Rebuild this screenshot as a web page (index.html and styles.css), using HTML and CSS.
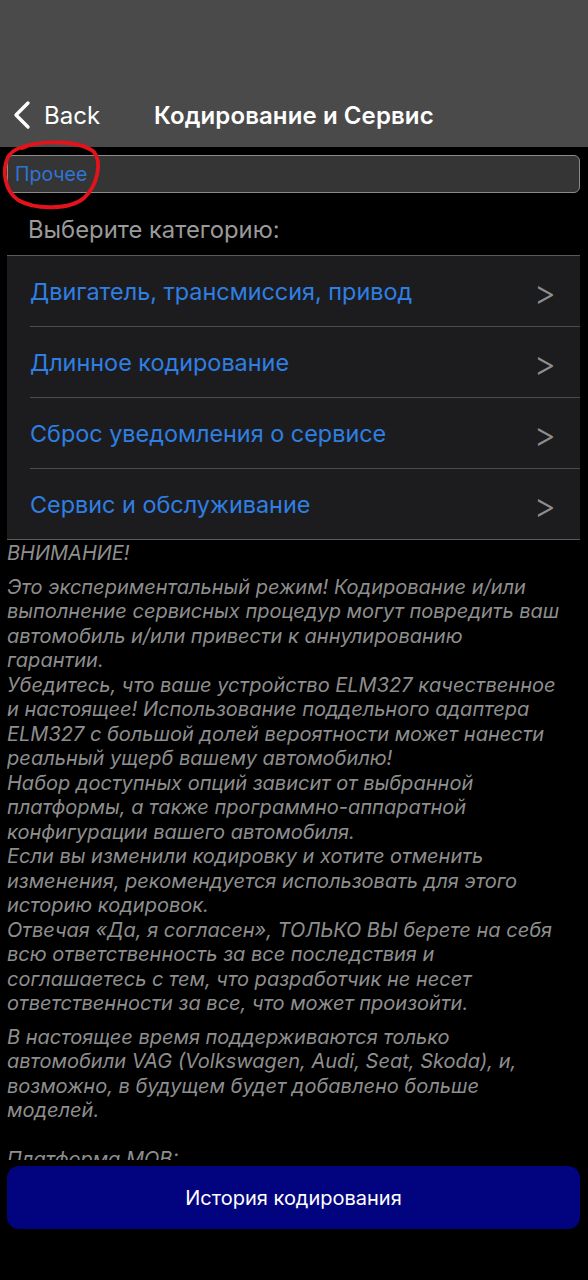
FILE: index.html
```html
<!DOCTYPE html>
<html lang="ru">
<head>
    <meta charset="UTF-8">
    <title>Кодирование и Сервис</title>
    <link rel="stylesheet" href="styles.css">
</head>
<body>
<div class="screen">
    <div class="navbar">
        <div class="back">
            <svg class="chevron" width="20" height="30" viewBox="0 0 20 30">
                <path d="M16 3 L4 15 L16 27" fill="none" stroke="#fff" stroke-width="3.4" stroke-linecap="round" stroke-linejoin="round"/>
            </svg>
            <span>Back</span>
        </div>
        <div class="title">Кодирование и Сервис</div>
    </div>

    <div class="content">
        <div class="platform">Прочее</div>

        <div class="caption">Выберите категорию:</div>

        <ul class="menu">
            <li><span>Двигатель, трансмиссия, привод</span><span class="arrow">&gt;</span></li>
            <li><span>Длинное кодирование</span><span class="arrow">&gt;</span></li>
            <li><span>Сброс уведомления о сервисе</span><span class="arrow">&gt;</span></li>
            <li><span>Сервис и обслуживание</span><span class="arrow">&gt;</span></li>
        </ul>

        <div class="notes">
            <p class="head">ВНИМАНИЕ!</p>
            <p>Это экспериментальный режим! Кодирование и/или<br>
            выполнение сервисных процедур могут повредить ваш<br>
            автомобиль и/или привести к аннулированию<br>
            гарантии.<br>
            Убедитесь, что ваше устройство ELM327 качественное<br>
            и настоящее! Использование поддельного адаптера<br>
            ELM327 с большой долей вероятности может нанести<br>
            реальный ущерб вашему автомобилю!<br>
            Набор доступных опций зависит от выбранной<br>
            платформы, а также программно-аппаратной<br>
            конфигурации вашего автомобиля.<br>
            Если вы изменили кодировку и хотите отменить<br>
            изменения, рекомендуется использовать для этого<br>
            историю кодировок.<br>
            Отвечая «Да, я согласен», ТОЛЬКО ВЫ берете на себя<br>
            всю ответственность за все последствия и<br>
            соглашаетесь с тем, что разработчик не несет<br>
            ответственности за все, что может произойти.</p>
            <p>В настоящее время поддерживаются только<br>
            автомобили VAG (Volkswagen, Audi, Seat, Skoda), и,<br>
            возможно, в будущем будет добавлено больше<br>
            моделей.</p>
            <p class="gap">Платформа MQB:</p>
        </div>

        <button class="history">История кодирования</button>
    </div>

    <svg class="mark" width="110" height="90" viewBox="0 0 110 90">
        <path d="M22 18 C40 10 80 10 94 22 C102 32 98 55 84 68 C70 80 35 80 18 70 C4 60 2 40 8 27 C12 20 22 16 34 14"
              fill="none" stroke="#e3131b" stroke-width="3.8" stroke-linecap="round"/>
    </svg>
</div>
</body>
</html>
```

FILE: styles.css
```css
body {
    margin: 0;
    background-color: #000;
    font-family: Inter, "Noto Sans", sans-serif;
}
.screen {
    position: relative;
    width: 588px;
    height: 1280px;
    background-color: #000;
    overflow: hidden;
}
.navbar {
    height: 147px;
    background-color: #4a4a4a;
    display: flex;
    align-items: flex-end;
    padding: 0 0 17px 12px;
    box-sizing: border-box;
    color: #fff;
}
.back {
    display: flex;
    align-items: center;
    gap: 12px;
    font-size: 24px;
    width: 142px;
}
.title {
    font-size: 24px;
    font-weight: 600;
    letter-spacing: 0.1px;
}
.content {
    padding: 8px 8px 0 7px;
}
.platform {
    height: 38px;
    box-sizing: border-box;
    border: 1.5px solid #8a8a8a;
    border-radius: 6px;
    background-color: #353535;
    color: #2f74d6;
    font-size: 19.5px;
    padding: 0 7px;
    display: flex;
    align-items: center;
}
.caption {
    color: #9a9a9a;
    font-size: 23.8px;
    padding: 22px 0 11px 21px;
}
.menu {
    list-style: none;
    margin: 0;
    padding: 0 0 0 23px;
    background-color: #1c1c1e;
    border-top: 1.5px solid #5a5a5a;
    border-bottom: 1.5px solid #5a5a5a;
}
.menu li {
    height: 70px;
    display: flex;
    align-items: center;
    justify-content: space-between;
    padding-right: 24px;
    color: #2f7fe3;
    font-size: 23.4px;
    border-bottom: 1.5px solid #4c4c4c;
}
.menu li:last-child {
    border-bottom: none;
}
.menu .arrow {
    color: #8e8e8e;
    font-size: 34px;
    font-weight: 300;
    margin-top: 2px;
}
.notes {
    height: 620px;
    overflow: hidden;
    color: #8e8e8e;
    font-style: italic;
    font-size: 20px;
    line-height: 24.5px;
    white-space: nowrap;
}
.notes p {
    margin: 0 0 9px;
}
.notes .head {
    margin: 1px 0 9px;
}
.notes .gap {
    margin-top: 24px;
}
.history {
    display: block;
    width: 100%;
    height: 63px;
    margin-top: 6px;
    border: none;
    border-radius: 12px;
    background-color: #02047f;
    color: #fff;
    font-family: Inter, "Noto Sans", sans-serif;
    font-size: 20px;
}
.mark {
    position: absolute;
    left: 0;
    top: 130px;
}
```
